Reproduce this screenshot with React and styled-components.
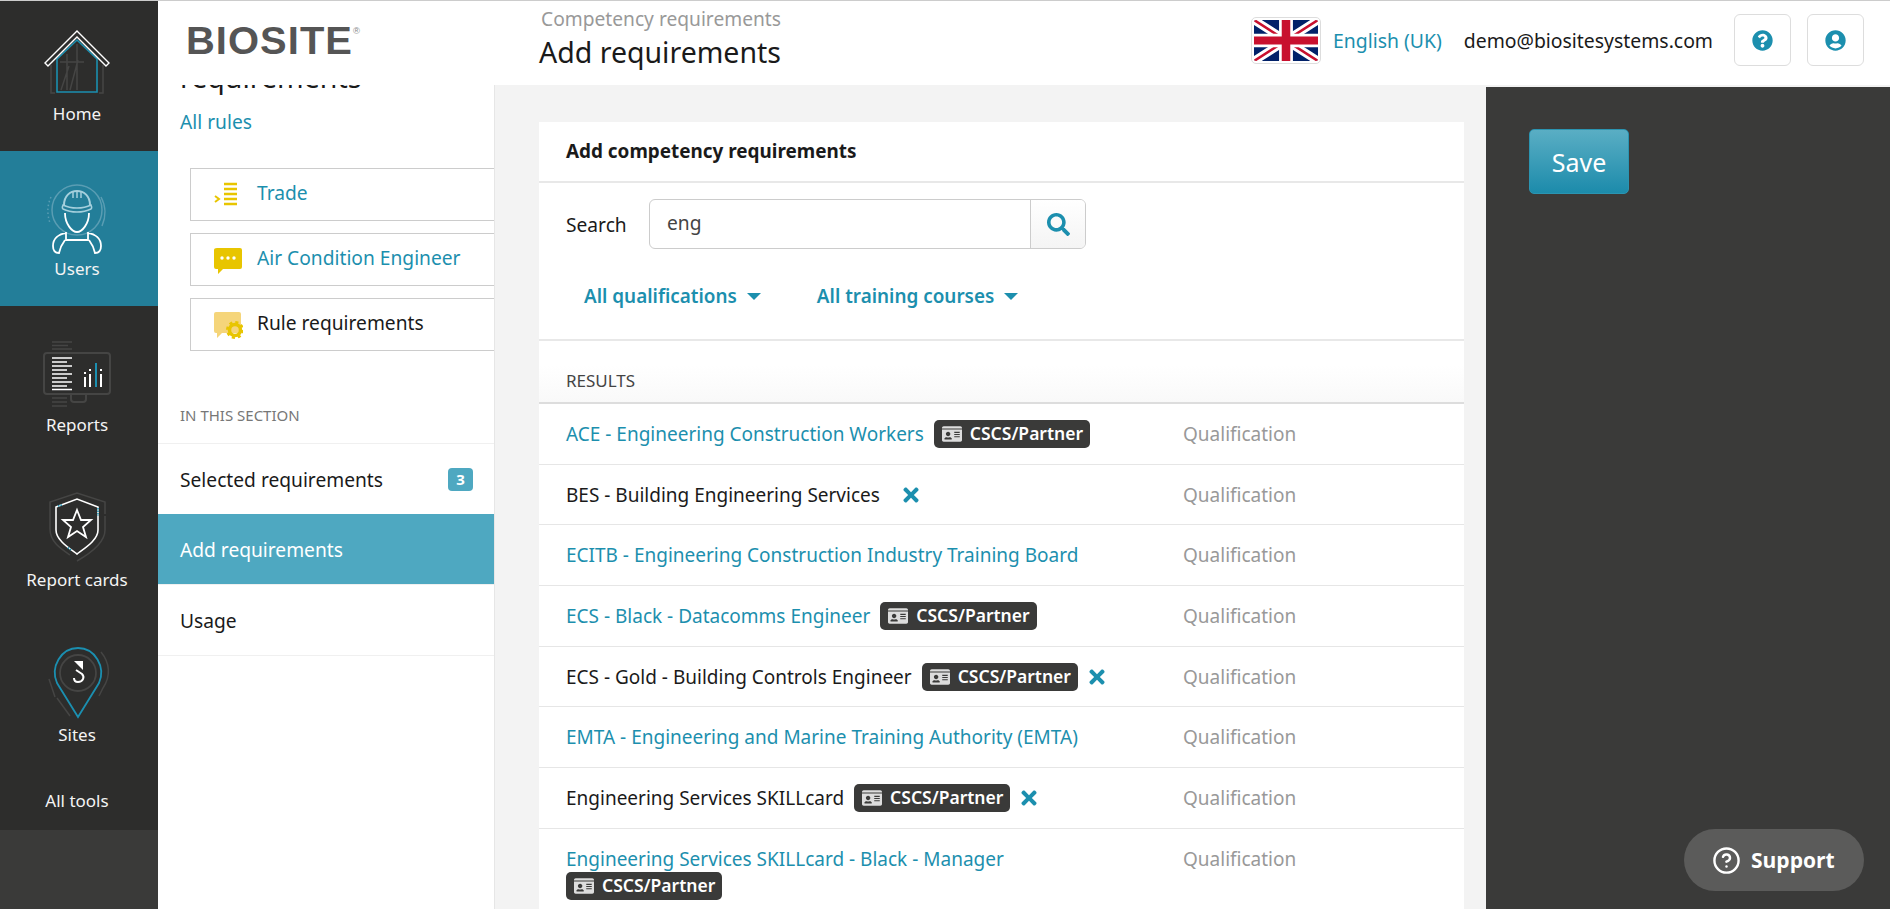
import React from 'react';
import styled, { createGlobalStyle } from 'styled-components';
import { FaTimes, FaSearch, FaQuestionCircle, FaUserCircle, FaIdCard } from 'react-icons/fa';
import { CircleHelp } from 'lucide-react';

const teal = '#1c8fae';
const font = '"Noto Sans", sans-serif';

const GlobalStyle = createGlobalStyle`
    html, body {
        margin: 0;
        padding: 0;
        height: 100%;
        overflow: hidden;
    }
    body {
        font-family: ${font};
        font-size: 19.2px;
        color: #1a1a1a;
        background: #fff;
    }
    * {
        box-sizing: border-box;
    }
`;

const Page = styled.div`
    display: flex;
    height: 100vh;
    border-top: 1px solid #ccc;
    overflow: hidden;
    position: relative;
`;

const Rail = styled.nav`
    width: 158px;
    flex: none;
    display: flex;
    flex-direction: column;
    background: #3a3a39;
`;

const NavList = styled.div`
    background: #2d2d2c;
`;

const NavItem = styled.a`
    display: flex;
    flex-direction: column;
    justify-content: flex-end;
    align-items: center;
    height: ${p => p.$height || 155.3}px;
    padding-bottom: 27px;
    background: ${p => (p.$active ? '#237e99' : 'transparent')};
    color: #f4f4f4;
    font-size: 17px;
    line-height: 20px;
`;

const AllTools = styled(NavItem)`
    height: 58px;
    padding-bottom: 19px;
`;

const NavLabel = styled.span`
    padding-right: 4px;
`;

const NavIcon = styled.svg`
    display: block;
    width: 158px;
    height: 90px;
    flex: none;
    fill: none;
`;

const Content = styled.div`
    flex: 1;
    min-width: 0;
    display: flex;
    flex-direction: column;
`;

const Header = styled.header`
    height: 84px;
    flex: none;
    display: flex;
    align-items: center;
    background: #fff;
    padding: 0 26px 6px 0;
`;

const LogoBox = styled.div`
    width: 381px;
    flex: none;
    padding: 2px 0 0 28px;
`;

const Logo = styled.span`
    display: inline-block;
    font-family: "Liberation Sans", sans-serif;
    font-weight: 700;
    font-size: 38px;
    line-height: 40px;
    letter-spacing: 1px;
    color: #555;
    transform: scaleX(1.05);
    transform-origin: left center;
`;

const LogoMark = styled.sup`
    font-size: 9px;
    font-weight: 400;
    color: #888;
    vertical-align: 20px;
    line-height: 0;
    letter-spacing: 0;
`;

const TitleBlock = styled.div`
    flex: 1;
    align-self: flex-start;
`;

const Crumb = styled.div`
    font-size: 19.2px;
    line-height: 24px;
    margin-top: 6px;
    padding-left: 2px;
    color: #999;
`;

const PageTitle = styled.h1`
    margin: 3px 0 0;
    font-size: 28.5px;
    font-weight: 400;
    line-height: 36px;
    color: #1a1a1a;
`;

const Flag = styled.svg`
    display: block;
    width: 70px;
    height: 47px;
    padding: 2px;
    border: 1px solid #ddd;
    border-radius: 5px;
    margin-right: 12px;
`;

const Language = styled.a`
    color: ${teal};
    font-size: 19.4px;
    margin-right: 22px;
`;

const Email = styled.span`
    font-size: 19.4px;
    margin-right: 21px;
`;

const IconButton = styled.button`
    width: 57px;
    height: 52px;
    margin-left: ${p => p.$gap || 0}px;
    display: flex;
    align-items: center;
    justify-content: center;
    background: #fff;
    border: 1px solid #ddd;
    border-radius: 6px;
    color: ${teal};
    font-size: 21px;
    padding: 0;
`;

const Body = styled.div`
    flex: 1;
    min-height: 0;
    display: flex;
    background: #f3f3f3;
`;

const SidePanel = styled.aside`
    width: 336px;
    flex: none;
    background: #fff;
    overflow: hidden;
    box-shadow: 1px 0 0 #e6e6e6;
`;

const SideHeading = styled.h2`
    margin: -26px 0 0;
    padding-left: 22px;
    font-size: 28.5px;
    font-weight: 400;
    line-height: 36px;
`;

const SideLink = styled.a`
    display: block;
    margin: 15px 0 34px 22px;
    color: ${teal};
    line-height: 24px;
`;

const Crumbs = styled.div`
    display: flex;
    flex-direction: column;
    gap: 12px;
    padding-left: 32px;
`;

const CrumbCard = styled.div`
    height: 53px;
    display: flex;
    align-items: center;
    gap: 14px;
    padding-left: 22px;
    border: 1px solid #ccc;
    border-right: 0;
    color: ${p => (p.$link ? teal : '#1a1a1a')};
`;

const CrumbLabel = styled.span`
    padding-bottom: 5px;
`;

const CrumbIcon = styled.svg`
    display: block;
    width: 30px;
    height: 30px;
    flex: none;
`;

const SectionLabel = styled.div`
    margin-top: 52px;
    height: 40px;
    padding-left: 22px;
    font-size: 15px;
    line-height: 24px;
    color: #777;
`;

const SectionItem = styled.a`
    height: ${p => (p.$active ? 70 : 71)}px;
    display: flex;
    align-items: center;
    justify-content: space-between;
    padding: 0 21px 0 22px;
    background: ${p => (p.$active ? '#4ea8c1' : '#fff')};
    color: ${p => (p.$active ? '#fff' : '#1a1a1a')};
    border-top: ${p => (p.$active ? 0 : '1px solid #f0f0f0')};
`;

const SectionEnd = styled.div`
    border-top: 1px solid #f0f0f0;
`;

const Count = styled.span`
    width: 25px;
    height: 23px;
    display: flex;
    align-items: center;
    justify-content: center;
    border-radius: 4px;
    background: #4ea8c1;
    color: #fff;
    font-size: 15px;
    font-weight: 700;
`;

const Main = styled.main`
    flex: 1;
    min-width: 0;
    overflow: hidden;
    padding: 37px 22px 0 45px;
`;

const Card = styled.section`
    background: #fff;
`;

const CardTitle = styled.h3`
    margin: 0;
    height: 61px;
    padding: 17px 0 0 27px;
    font-size: 18.9px;
    font-weight: 700;
    line-height: 24px;
    border-bottom: 2px solid #e8e8e8;
`;

const SearchRow = styled.div`
    display: flex;
    align-items: center;
    padding: 16px 0 0 27px;
`;

const SearchLabel = styled.label`
    width: 83px;
`;

const SearchBox = styled.div`
    width: 437px;
    height: 50px;
    display: flex;
    border: 1px solid #ccc;
    border-radius: 6px;
    overflow: hidden;
`;

const SearchInput = styled.div`
    flex: 1;
    padding-left: 17px;
    line-height: 46px;
    color: #444;
`;

const SearchButton = styled.div`
    width: 55px;
    display: flex;
    align-items: center;
    justify-content: center;
    border-left: 1px solid #ccc;
    background: linear-gradient(#fff, #f4f4f4);
    color: ${teal};
    font-size: 23px;
`;

const FilterRow = styled.div`
    display: flex;
    gap: 56px;
    height: 92px;
    padding: 35px 0 0 45px;
    border-bottom: 2px solid #e8e8e8;
`;

const Filter = styled.a`
    display: flex;
    align-items: center;
    gap: 10px;
    height: 24px;
    color: ${teal};
    font-size: 18.9px;
    font-weight: 600;
`;

const Caret = styled.span`
    width: 0;
    height: 0;
    border-left: 7px solid transparent;
    border-right: 7px solid transparent;
    border-top: 7px solid ${teal};
`;

const ResultsHead = styled.div`
    height: 63px;
    padding: 28px 0 0 27px;
    font-size: 17px;
    line-height: 24px;
    color: #444;
    background: linear-gradient(#fff 40%, #f9f9f9);
    border-bottom: 2px solid #ddd;
`;

const Row = styled.div`
    display: flex;
    align-items: flex-start;
    padding: 17.85px 0;
    font-size: 19px;
    border-bottom: 1px solid #e6e6e6;
`;

const RowTitle = styled.div`
    width: 644px;
    flex: none;
    display: flex;
    flex-wrap: wrap;
    align-items: center;
    padding: 0 60px 0 27px;
    row-gap: 3px;
    line-height: 24px;
`;

const RowName = styled.a`
    margin-right: ${p => p.$gap || 0}px;
    color: ${p => (p.$link ? teal : '#1a1a1a')};
`;

const Badge = styled.span`
    height: 28px;
    margin: -2px 0;
    padding: 0 7px 0 8px;
    display: inline-flex;
    align-items: center;
    gap: 8px;
    border-radius: 5px;
    background: #3a3a39;
    color: #fff;
    font-size: 17.5px;
    font-weight: 600;
    line-height: 1;

    svg {
        color: #ddd;
        font-size: 20px;
    }
`;

const Remove = styled.span`
    display: inline-flex;
    margin-left: ${p => p.$gap}px;
    color: ${teal};
    font-size: 22px;
`;

const RowType = styled.span`
    line-height: 24px;
    color: #999;
`;

const Actions = styled.aside`
    width: 404px;
    flex: none;
    margin-top: 2px;
    padding: 42px 0 0 43px;
    background: #3a3a39;
`;

const SaveButton = styled.button`
    width: 100px;
    height: 65px;
    border: 1px solid #2b94b1;
    border-radius: 5px;
    background: linear-gradient(#5aaec4, #1c8bab);
    color: #fff;
    font-family: ${font};
    font-size: 25px;
`;

const Support = styled.a`
    position: absolute;
    right: 26px;
    bottom: 18px;
    width: 180px;
    height: 62px;
    display: flex;
    align-items: center;
    gap: 10px;
    padding-left: 28px;
    border-radius: 31px;
    background: #5b5b5a;
    color: #fff;
    font-family: "Open Sans", sans-serif;
    font-size: 21px;
    font-weight: 700;
`;

const results = [
    { name: 'ACE - Engineering Construction Workers', link: true, badge: true },
    { name: 'BES - Building Engineering Services', remove: 20 },
    { name: 'ECITB - Engineering Construction Industry Training Board', link: true },
    { name: 'ECS - Black - Datacomms Engineer', link: true, badge: true },
    { name: 'ECS - Gold - Building Controls Engineer', badge: true, remove: 8 },
    { name: 'EMTA - Engineering and Marine Training Authority (EMTA)', link: true },
    { name: 'Engineering Services SKILLcard', badge: true, remove: 8 },
    { name: 'Engineering Services SKILLcard - Black - Manager', link: true, badge: true }
];

const grey = '#454544';
const blue = '#1b8fb0';

const HomeIcon = () => (
    <NavIcon viewBox="0 14 158 90">
        <path d="M51 65v28h4M103 65v28h-4" stroke={grey} strokeWidth="1.5" />
        <path d="M77 44v46M67 54v36M69 66l-8 24M78 60l-8 30M60 62h24" stroke={grey} strokeWidth="1.5" />
        <path d="M57 92V59l20-19 20 19v33z" stroke={blue} strokeWidth="1.6" />
        <path d="M77 31l32 32-3 3-29-29-29 29-3-3z" stroke="#fff" strokeWidth="1.4" strokeLinejoin="miter" />
    </NavIcon>
);

const UsersIcon = () => (
    <NavIcon viewBox="0 169 158 90">
        <circle cx="77" cy="210" r="25" stroke="#5a9db3" strokeWidth="1.5" />
        <path d="M101 197c5 9 5 20 1 29" stroke="#5a9db3" strokeWidth="1.5" />
        <path d="M51 197c-4 9-4 17-1 26" stroke="#5a9db3" strokeWidth="1.5" strokeDasharray="1.5 2.5" />
        <path d="M64 205c0-9 6-14 13-14s13 5 13 14" stroke="#a5d0dd" strokeWidth="2" />
        <path d="M73 198v-7M77 198v-7M81 198v-7" stroke="#a5d0dd" strokeWidth="1.5" />
        <path d="M63 205c-1 2-1 3 0 4 8 4 20 4 28 0 1-1 1-2 0-4-8 4-20 4-28 0z" stroke="#a5d0dd" strokeWidth="1.5" />
        <path d="M65 213c0 11 7 19 12 19s12-8 12-19" stroke="#fff" strokeWidth="1.8" />
        <path d="M66 232v8h22v-8M66 233c-7 1-13 5-13 13 0 4 2 7 6 7 1-5 3-9 6-13M88 233c7 1 13 5 13 13 0 4-2 7-6 7-1-5-3-9-6-13" stroke="#fff" strokeWidth="1.8" />
    </NavIcon>
);

const ReportsIcon = () => (
    <NavIcon viewBox="0 324 158 90">
        <path d="M52 341h20M52 344.500h16M52 348h20M52 397h15M52 401h15M52 405h15" stroke={grey} strokeWidth="1.5" />
        <rect x="44" y="352" width="66" height="41" rx="3" stroke={grey} strokeWidth="2" />
        <path d="M71 393v5q0 3 3 3h9q3 0 3-3v-5" stroke={grey} strokeWidth="2" />
        <path d="M52 357h20M52 361h15M52 365h20M52 369h15M52 373h20M52 377h15M52 381h20M52 385h15M52 388.500h20" stroke="#fff" strokeWidth="1.6" />
        <path d="M85 376v10M90 373v13M101 373v13M85 371v2M90 368v2M101 368v2" stroke="#fff" strokeWidth="2" />
        <path d="M96 362v24" stroke={blue} strokeWidth="2" />
    </NavIcon>
);

const CardsIcon = () => (
    <NavIcon viewBox="0 480 158 90">
        <path d="M70 555c-9-6-20-13-20-26v-27l27-9 28 9v12M105 516v14c0 12-14 23-28 31" stroke={grey} strokeWidth="1.5" />
        <path d="M56 507l21-8 21 8v23c0 10-13 18-21 24-8-6-21-14-21-24z" stroke="#fff" strokeWidth="1.6" />
        <path d="M58 506l4-1M98 508v8M71 550l-4-3" stroke={blue} strokeWidth="1.6" strokeDasharray="1.5 1" />
        <path d="M77 510l4 10h10l-8 7 3 10-9-6-9 6 3-10-8-7h10z" stroke="#fff" strokeWidth="1.8" />
    </NavIcon>
);

const SitesIcon = () => (
    <NavIcon viewBox="0 635 158 90">
        <path d="M101 652c9 11 10 24 2 36l-4 8M49 679l6 18M57 698l13 18" stroke={grey} strokeWidth="1.5" />
        <circle cx="78" cy="673" r="18" stroke={grey} strokeWidth="1.8" />
        <path d="M78 717l-21-34c-7-16 4-35 21-35s28 19 21 35z" stroke={blue} strokeWidth="1.8" />
        <path d="M74 661h9v9z" fill="#fff" />
        <path d="M76 670l6 4c3 3 1 8-4 8-2 0-4-1-4-4" stroke="#fff" strokeWidth="2" />
    </NavIcon>
);

const UkFlag = () => (
    <Flag viewBox="0 0 60 40" preserveAspectRatio="none">
        <rect width="60" height="40" fill="#012169" />
        <path d="M0 0l60 40M60 0L0 40" stroke="#fff" strokeWidth="8" />
        <path d="M0 0l60 40M60 0L0 40" stroke="#c8102e" strokeWidth="2.500" />
        <path d="M30 0v40M0 20h60" stroke="#fff" strokeWidth="13" />
        <path d="M30 0v40M0 20h60" stroke="#c8102e" strokeWidth="8" />
    </Flag>
);

const TradeIcon = () => (
    <CrumbIcon viewBox="0 0 30 30">
        <path d="M11 4h13M11 9h13M11 14h13M11 19h13M11 24h13" stroke="#e8c500" strokeWidth="2.500" />
        <path d="M2 16l4 3-4 3" stroke="#e8c500" strokeWidth="2" fill="none" />
    </CrumbIcon>
);

const BubbleIcon = () => (
    <CrumbIcon viewBox="0 0 30 30">
        <path d="M4 3h23q2 0 2 2v17q0 2-2 2H10l-5 5v-5H3q-2 0-2-2V5q0-2 3-2z" fill="#e8c500" />
        <circle cx="9" cy="13" r="1.700" fill="#fff" />
        <circle cx="15" cy="13" r="1.700" fill="#fff" />
        <circle cx="21" cy="13" r="1.700" fill="#fff" />
    </CrumbIcon>
);

const RuleIcon = () => (
    <CrumbIcon viewBox="0 0 30 30">
        <path d="M3 2h23q2 0 2 2v17q0 2-2 2H9l-5 5v-5H3q-2 0-2-2V4q0-2 2-2z" fill="#f5d57a" />
        <circle cx="22" cy="20" r="7.500" fill="none" stroke="#e8c500" strokeWidth="3" strokeDasharray="3 2.900" />
        <circle cx="22" cy="20" r="5.500" fill="none" stroke="#e8c500" strokeWidth="3.500" />
    </CrumbIcon>
);

const App = () => {
    return (
        <Page>
            <GlobalStyle />
            <Rail>
                <NavList>
                    <NavItem $height={150}><HomeIcon /><NavLabel>Home</NavLabel></NavItem>
                    <NavItem $active><UsersIcon /><NavLabel>Users</NavLabel></NavItem>
                    <NavItem><ReportsIcon /><NavLabel>Reports</NavLabel></NavItem>
                    <NavItem><CardsIcon /><NavLabel>Report cards</NavLabel></NavItem>
                    <NavItem><SitesIcon /><NavLabel>Sites</NavLabel></NavItem>
                    <AllTools><NavLabel>All tools</NavLabel></AllTools>
                </NavList>
            </Rail>
            <Content>
                <Header>
                    <LogoBox>
                        <Logo>BIOSITE<LogoMark>®</LogoMark></Logo>
                    </LogoBox>
                    <TitleBlock>
                        <Crumb>Competency requirements</Crumb>
                        <PageTitle>Add requirements</PageTitle>
                    </TitleBlock>
                    <UkFlag />
                    <Language>English (UK)</Language>
                    <Email>demo@biositesystems.com</Email>
                    <IconButton><FaQuestionCircle /></IconButton>
                    <IconButton $gap={16}><FaUserCircle /></IconButton>
                </Header>
                <Body>
                    <SidePanel>
                        <SideHeading>requirements</SideHeading>
                        <SideLink>All rules</SideLink>
                        <Crumbs>
                            <CrumbCard $link><TradeIcon /><CrumbLabel>Trade</CrumbLabel></CrumbCard>
                            <CrumbCard $link><BubbleIcon /><CrumbLabel>Air Condition Engineer</CrumbLabel></CrumbCard>
                            <CrumbCard><RuleIcon /><CrumbLabel>Rule requirements</CrumbLabel></CrumbCard>
                        </Crumbs>
                        <SectionLabel>IN THIS SECTION</SectionLabel>
                        <SectionItem>Selected requirements<Count>3</Count></SectionItem>
                        <SectionItem $active>Add requirements</SectionItem>
                        <SectionItem>Usage</SectionItem>
                        <SectionEnd />
                    </SidePanel>
                    <Main>
                        <Card>
                            <CardTitle>Add competency requirements</CardTitle>
                            <SearchRow>
                                <SearchLabel>Search</SearchLabel>
                                <SearchBox>
                                    <SearchInput>eng</SearchInput>
                                    <SearchButton><FaSearch /></SearchButton>
                                </SearchBox>
                            </SearchRow>
                            <FilterRow>
                                <Filter>All qualifications<Caret /></Filter>
                                <Filter>All training courses<Caret /></Filter>
                            </FilterRow>
                            <ResultsHead>RESULTS</ResultsHead>
                            {results.map(item => (
                                <Row key={item.name}>
                                    <RowTitle>
                                        <RowName $link={item.link} $gap={item.badge ? 10 : 0}>{item.name}</RowName>
                                        {item.badge && (
                                            <Badge><FaIdCard />CSCS/Partner</Badge>
                                        )}
                                        {item.remove && (
                                            <Remove $gap={item.remove}><FaTimes /></Remove>
                                        )}
                                    </RowTitle>
                                    <RowType>Qualification</RowType>
                                </Row>
                            ))}
                        </Card>
                    </Main>
                    <Actions>
                        <SaveButton>Save</SaveButton>
                    </Actions>
                </Body>
            </Content>
            <Support><CircleHelp size={29} strokeWidth={2} />Support</Support>
        </Page>
    );
};

export default App;
